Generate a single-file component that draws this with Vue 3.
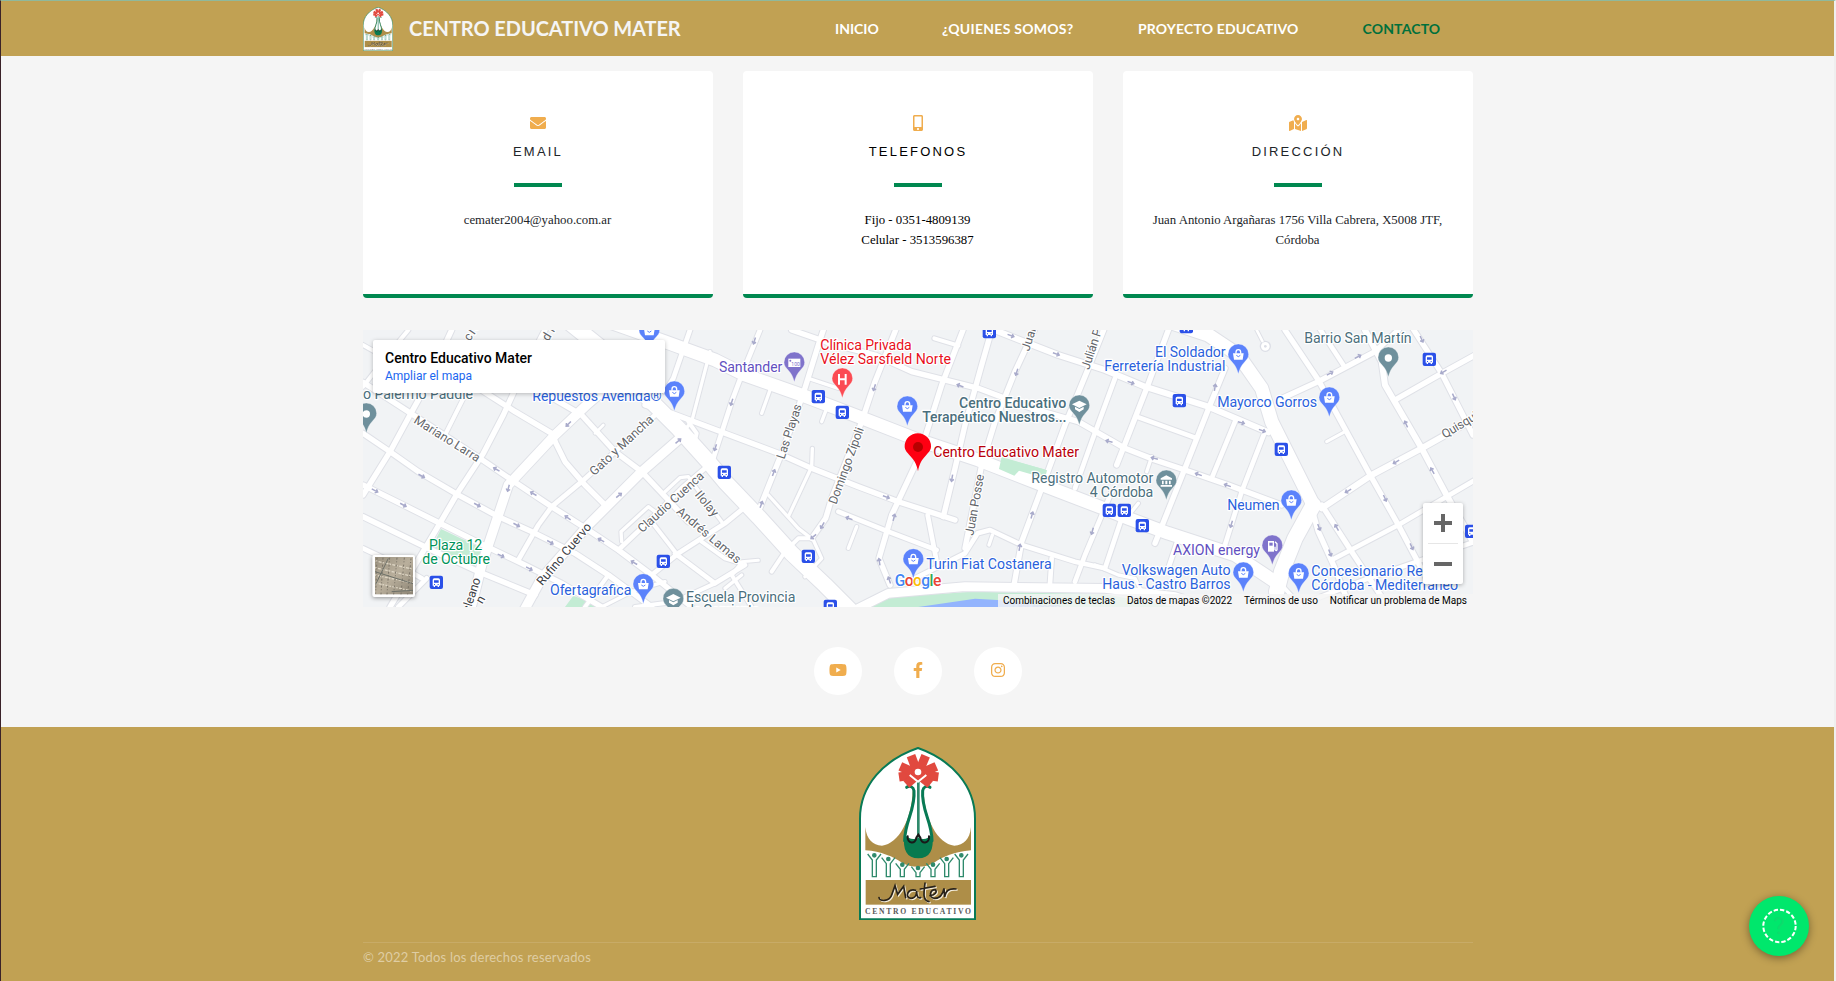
<script setup>
const nav = [
  { t: 'INICIO', c: 'n1' },
  { t: '¿QUIENES SOMOS?', c: 'n2' },
  { t: 'PROYECTO EDUCATIVO', c: 'n3' },
  { t: 'CONTACTO', c: 'n4 active' },
]
const cards = [
  { icon: 'mail', title: 'EMAIL', lines: ['cemater2004@yahoo.com.ar'], tone: 'ink' },
  { icon: 'phone', title: 'TELEFONOS', lines: ['Fijo - 0351-4809139', 'Celular - 3513596387'], tone: 'black' },
  { icon: 'map', title: 'DIRECCIÓN', lines: ['Juan Antonio Argañaras 1756 Villa Cabrera, X5008 JTF,', 'Córdoba'], tone: 'ink' },
]
const petals = [[120, 90], [124, 58], [156, 26], [200, 26], [232, 58], [238, 90], [142, 112], [214, 112]]
const figures = [[46, 0], [88, 11], [130, 28], [177, 38], [222, 28], [263, 11], [307, 0]]
// Map units are thirds of a pixel.
const roads = [
  // west
  [16, '24,172 160,260 375,400 470,465 590,545 700,615 790,675 890,750 1010,846'],
  [16, '24,325 105,380 190,440 310,510 430,575 530,620 660,685 760,750 890,846'],
  [16, '24,480 145,540 265,600 385,660 500,715 620,775 740,846'],
  [16, '24,575 240,680 370,740 540,810'],
  [14, '24,670 130,720 200,760'],
  [16, '24,510 105,380 165,270 215,180 260,80 290,15'],
  [12, '24,185 90,100 160,15'],
  [12, '24,60 150,130 290,210'],
  [16, '105,846 240,620 310,500 385,385 445,270 500,150 570,15'],
  [12, '270,330 330,210'],
  [14, '130,846 215,760'],
  [28, '505,860 560,760 700,600 860,440 975,340'],
  [28, '345,860 380,720 430,570 460,480 600,330 700,235 800,150'],
  [14, '490,705 550,600 590,545 680,470 780,380 900,270'],
  [16, '340,170 480,260 590,325 603,355 630,410 690,480 750,540'],
  [16, '560,200 680,270 780,380 860,440 940,525 1000,590'],
  [46, '640,-10 790,110 880,220 970,310 1060,410 1110,470 1210,575 1310,685 1410,780 1490,860'],
  [16, '870,240 950,265 1110,325 1270,385 1370,430 1510,485 1630,530 1800,585'],
  [38, '760,-10 930,50 1080,105 1170,150 1340,210 1510,275 1690,345 1870,405 2050,475 2240,548 2320,580 2440,625 2640,690 2760,770'],
  [14, '1005,15 955,160 930,200'],
  [10, '1065,80 1010,290 985,320'],
  [12, '1000,290 1025,325 1020,345'],
  [14, '1075,400 1130,230 1160,150 1215,15'],
  [8, '745,300 720,325'],
  [10, '800,650 798,620 880,545 900,560'],
  [12, '890,590 960,680'],
  [10, '930,500 975,458 1000,455 1025,490 1100,590'],
  [14, '790,675 880,590 980,490 1050,430'],
  [14, '890,750 970,685 1110,595 1165,550'],
  [14, '960,685 1080,775 1170,720'],
  [12, '1080,775 960,830 840,846'],
  [12, '760,750 690,846'],
  [10, '740,846 830,800 930,770'],
  [12, '1040,650 1110,700 1160,715 1130,750 1190,846'],
  [9, '1160,710 1210,706'],
  [10, '1110,790 1160,750'],
  // centre
  [16, '1210,560 1280,385 1345,205 1390,60 1405,15'],
  [16, '1370,640 1412,580 1430,520 1520,290 1560,170 1622,15'],
  [16, '1605,780 1572,700 1610,570 1690,400 1760,180 1824,15'],
  [16, '1765,575 1800,430 1830,300 1880,120 1910,15'],
  [16, '1830,670 1880,420 1920,290 1980,140 2038,15'],
  [16, '1978,775 2000,650 2060,490 2130,300 2200,130 2246,15'],
  [14, '2160,770 2190,690 2270,500'],
  [14, '2160,490 2210,350 2280,160'],
  [16, '1310,15 1440,60 1560,90 1670,140 1870,190 2030,250 2170,290 2310,370 2400,405 2490,435 2620,480 2780,540'],
  [18, '1880,0 2110,90 2250,135 2370,185 2560,245 2740,322'],
  [14, '1450,560 1600,620 1745,675'],
  [14, '1718,570 1746,715'],
  [10, '1480,670 1505,605'],
  [10, '1240,510 1330,610 1375,645 1400,700 1350,755'],
  [10, '1300,575 1370,425 1372,370'],
  [10, '1220,265 1245,195'],
  [10, '1400,290 1415,250'],
  [10, '1360,160 1450,190'],
  [12, '1738,40 1810,62'],
  [14, '1660,770 1730,735 1830,685 1868,625 1905,615 2000,660 2160,710 2250,730'],
  [10, '1902,660 1912,630'],
  [14, '2085,775 2090,700'],
  [26, '1470,870 1600,805 1830,785 2250,790 2460,815 2560,846'],
  [12, '1250,740 1290,680 1330,640 1370,640'],
  // east
  [14, '2250,730 2300,580'],
  [16, '2400,655 2490,430 2565,240 2610,130'],
  [16, '2285,420 2375,190 2440,15'],
  [14, '2570,460 2640,290'],
  [14, '2610,660 2660,500 2730,320'],
  [14, '2345,275 2520,338'],
  [10, '2330,560 2350,535'],
  [10, '2375,440 2390,395'],
  [14, '2440,730 2470,640'],
  [10, '2220,720 2290,750 2340,760 2360,800'],
  [40, '2440,-10 2560,30 2650,90 2720,190 2750,290 2840,470 2875,540'],
  [46, '2875,540 2820,640 2780,740 2765,800'],
  [12, '2780,780 2840,846'],
  [16, '2790,15 2890,165 3040,440 3130,600 3220,770'],
  [16, '2770,225 2890,170 3060,80 3130,15'],
  [14, '2890,5 2965,120'],
  [18, '3030,15 3080,110 3090,180 3200,370 3280,520 3354,650'],
  [16, '3170,5 3260,145 3354,330'],
  [16, '3120,225 3260,145 3360,90'],
  [18, '2900,550 3050,450 3200,370 3360,280'],
  [14, '2930,705 3130,600 3360,465'],
  [16, '2870,550 2890,620 2940,730 2990,860'],
  [16, '2900,540 2990,680 3100,846'],
  [14, '2860,830 3040,760 3360,650'],
  [8, '2705,15 2722,48'],
  [9, '2915,350 2970,320'],
]
const arrows = [
  [640, 297, 135], [424, 433, -150], [460, 490, 105], [535, 506, -150], [200, 453, 28], [60, 497, 28],
  [145, 540, 28], [367, 540, 28], [485, 600, 28], [638, 578, -145], [586, 652, 30], [438, 692, 25],
  [523, 731, 28], [738, 645, -150], [837, 713, -150], [792, 511, -40], [970, 348, -40], [1081, 368, 108], [1130, 232, 108],
  [1198, 48, 108], [1256, 443, -70], [1219, 538, -70], [1558, 188, 108], [1594, 516, 20], [1482, 580, -160],
  [1402, 602, 120], [1375, 635, 140], [1617, 577, -75], [1573, 710, -100], [1603, 765, -110], [1791, 460, 100],
  [1815, 182, -160], [1985, 142, 108], [1968, 32, 20], [2104, 87, 20], [2031, 570, -75], [1994, 667, -80],
  [2212, 619, 105], [2328, 173, 20], [2580, 187, -80], [2659, 293, 15], [2722, 317, 20], [2262, 349, -165],
  [2398, 400, -165], [2530, 448, -160], [2617, 481, -160], [2629, 598, 108], [3009, 95, -28], [2925, 145, -28],
  [3200, 43, 65], [3265, 141, 150], [3297, 216, 65], [3153, 297, -115], [3232, 437, -120], [3123, 411, 150],
  [2979, 498, 150], [3090, 520, 65], [2892, 607, 70], [2945, 607, -120], [2925, 684, 70], [3170, 665, 65],
]
const buses = [[1108, 442], [925, 709], [244, 772], [1390, 215], [1462, 262], [1903, 20], [1360, 694], [1426, 844], [2473, 227], [2494, 5], [2263, 556], [2308, 556], [2362, 602], [2779, 373], [3223, 103], [3350, 619]]
// x, y of the pin's tip, fill, glyph
const pins = [
  [883, 72, '#5b82fb', 'bag'], [958, 256, '#5b82fb', 'bag'], [865, 834, '#5b82fb', 'bag'],
  [1657, 301, '#5b82fb', 'bag'], [1675, 759, '#5b82fb', 'bag'], [2650, 145, '#5b82fb', 'bag'],
  [2923, 274, '#5b82fb', 'bag'], [2809, 583, '#5b82fb', 'bag'], [2665, 799, '#5b82fb', 'bag'],
  [2831, 802, '#5b82fb', 'bag'], [1318, 169, '#7f73cb', 'atm'], [1462, 217, '#fb4b53', 'h'],
  [2173, 298, '#6f909c', 'cap'], [955, 878, '#6f909c', 'cap'], [34, 322, '#6f909c', 'dot'],
  [3100, 154, '#6f909c', 'dot'], [2434, 523, '#6f909c', 'bank'], [2752, 718, '#7f73cb', 'gas'],
]
// x, baseline, width, text, class, rotation
const labels = [
  [24, 223, 330, 'o Palermo Paddle', 'slate', 0],
  [532, 229, 388, 'Repuestos Avenida®', 'blue', 0],
  [222, 676, 160, 'Plaza 12', 'green', 0],
  [202, 718, 203, 'de Octubre', 'green', 0],
  [585, 809, 244, 'Ofertagrafica', 'blue', 0],
  [993, 830, 328, 'Escuela Provincia', 'slate', 0],
  [993, 870, 220, 'de Comiente', 'slate', 0],
  [1092, 142, 190, 'Santander', 'violet', 0],
  [1396, 76, 274, 'Clínica Privada', 'red', 0],
  [1396, 118, 392, 'Vélez Sarsfield Norte', 'red', 0],
  [1812, 250, 322, 'Centro Educativo', 'slate med', 0],
  [1702, 292, 432, 'Terapéutico Nuestros...', 'slate med', 0],
  [1735, 397, 437, 'Centro Educativo Mater', 'crimson', 0],
  [2029, 475, 366, 'Registro Automotor', 'slate', 0],
  [2204, 517, 191, '4 Córdoba', 'slate', 0],
  [1714, 733, 376, 'Turin Fiat Costanera', 'blue', 0],
  [2400, 97, 212, 'El Soldador', 'blue', 0],
  [2248, 139, 363, 'Ferretería Industrial', 'blue', 0],
  [2587, 247, 299, 'Mayorco Gorros', 'blue', 0],
  [2848, 55, 322, 'Barrio San Martín', 'slate', 0],
  [2617, 556, 157, 'Neumen', 'blue', 0],
  [2454, 691, 261, 'AXION energy', 'violet', 0],
  [2300, 751, 327, 'Volkswagen Auto', 'blue', 0],
  [2242, 793, 385, 'Haus - Castro Barros', 'blue', 0],
  [2869, 754, 430, 'Concesionario Renault', 'blue', 0],
  [2869, 796, 440, 'Córdoba - Mediterráneo', 'blue', 0],
  [1970, 864, 150, 'Río Primero', 'water', 0],
  [174, 292, 226, 'Mariano Larra', 'street', 32],
  [718, 454, 246, 'Gato y Mancha', 'street', -43],
  [862, 625, 252, 'Claudio Cuenca', 'street', -42],
  [1018, 510, 88, 'Ilolay', 'street', 50],
  [962, 563, 240, 'Andrés Lamas', 'street', 40],
  [562, 784, 232, 'Rufino Cuervo', 'street dark', -50],
  [344, 864, 106, 'cleano', 'street dark', -72],
  [352, 890, 80, 'ón', 'street dark', -60],
  [344, 50, 74, 'cler', 'street', -55],
  [580, 50, 74, 'dro', 'street', -58],
  [1288, 404, 170, 'Las Playas', 'street', -72],
  [1444, 540, 242, 'Domingo Zípoli', 'street', -70],
  [1855, 633, 186, 'Juan Posse', 'street', -80],
  [2022, 80, 114, 'Juan B', 'street', -72],
  [2202, 136, 146, 'Julián Pa', 'street', -72],
  [3269, 341, 138, 'Quisquis', 'street', -31],
]
</script>

<template>
  <div class="page">
    <svg class="defs" width="0" height="0" aria-hidden="true">
      <symbol id="mater" viewBox="0 0 351 519" preserveAspectRatio="none">
        <path d="M3 517V215C3 115 75 38 177 3 276 38 348 115 348 215V517Z" fill="#fff" stroke="#087a55" stroke-width="6" />
        <path d="M19 240c4 38 22 54 50 56 50-5 90-80 92-166H194c2 86 42 161 92 166 28-2 46-18 50-56v70c-50 4-85 20-109 36-28 18-72 18-100 0-24-16-60-33-108-36z" fill="#ae8e48" />
        <path d="M164 124c6 64-26 100-28 156h84c-2-56-34-92-28-156z" fill="#fff" />
        <path d="M136 262q20 22 42 10 22 12 42-10c6 48-8 72-42 72s-48-24-42-72z" fill="#087a4f" />
        <path d="M143 121c10-7 20-1 22 10 5 58-28 92-28 150M213 121c-10-7-20-1-22 10-5 58 28 92 28 150" fill="none" stroke="#087a55" stroke-width="9" stroke-linecap="round" />
        <path d="M178 100v172" fill="none" stroke="#2f8a6c" stroke-width="8" />
        <path d="M146 268c-2 22 24 26 26 4l6-9 6 9c2 22 28 18 26-4" fill="none" stroke="#191919" stroke-width="6" stroke-linecap="round" />
        <path v-for="p in petals" :key="p[0] + '-' + p[1]" :d="`M177 82L${p[0]} ${p[1]}`" stroke="#e1493f" stroke-width="27" />
        <circle cx="177" cy="75" r="10" fill="#fff" />
        <path d="m152 84 25 20 25-20" fill="none" stroke="#fff" stroke-width="6" />
        <g v-for="p in figures" :key="p[0]" fill="none" stroke="#2f8a6c" stroke-width="4">
          <circle :cx="p[0]" :cy="325 + p[1]" r="5" fill="#2f8a6c" />
          <path :d="`M${p[0] - 20} ${321 + p[1]}l14 18V389h12V${339 + p[1]}l14-18`" />
        </g>
        <rect x="20" y="399" width="316" height="74" fill="#ae8e48" />
        <g fill="none" stroke-width="5" stroke-linecap="round">
          <path v-for="s in [['#f5efe0', 3], ['#28221a', 0]]" :key="s[0]" :stroke="s[0]" :transform="`translate(${s[1]} ${s[1]})`" d="M60 452c2 14 32 10 38-8l10-28 8 26 18-24 6 34M170 430c-24-8-34 22-14 24 14 0 17-14 17-22 0 18 4 22 12 20M198 408c-2 22-10 52 12 56M184 426l44-8M213 446c16-2 22-12 16-18-16 0-22 24-2 26 16 0 24-10 28-30l2 26c4-20 12-26 34-24" />
        </g>
        <text x="18" y="502" textLength="318" font-family="Liberation Serif, serif" font-size="23" font-weight="700" fill="#5a5a5a">CENTRO EDUCATIVO</text>
      </symbol>
    </svg>

    <header class="bar">
      <div class="wrap bar-in">
        <svg class="logo-sm"><use href="#mater" width="30" height="44" /></svg>
        <span class="brand">CENTRO EDUCATIVO MATER</span>
        <nav>
          <a v-for="n in nav" :key="n.t" :class="n.c">{{ n.t }}</a>
        </nav>
      </div>
    </header>

    <main class="wrap">
      <section class="cards">
        <article v-for="c in cards" :key="c.title" :class="['card', c.tone]">
          <svg v-if="c.icon === 'mail'" class="ico" viewBox="0 0 512 512"><path d="M502.300 190.800c3.900-3.100 9.700-.2 9.700 4.700V400c0 26.500-21.500 48-48 48H48c-26.500 0-48-21.500-48-48V195.600c0-5 5.700-7.800 9.700-4.700 22.400 17.400 52.100 39.500 154.100 113.600 21.100 15.400 56.700 47.800 92.200 47.600 35.700.3 72-32.800 92.300-47.600 102-74.100 131.600-96.300 154-113.700zM256 320c23.200.4 56.600-29.200 73.400-41.400 132.700-96.300 142.800-104.700 173.400-128.700 5.800-4.500 9.200-11.500 9.200-18.900v-19c0-26.500-21.500-48-48-48H48c-26.500 0-48 21.500-48 48v19c0 7.400 3.400 14.300 9.200 18.900 30.600 23.900 40.700 32.400 173.400 128.700 16.800 12.200 50.200 41.800 73.400 41.400z" /></svg>
          <svg v-else-if="c.icon === 'phone'" class="ico" viewBox="-96 0 512 512"><path d="M272 0H48C21.500 0 0 21.500 0 48v416c0 26.500 21.500 48 48 48h224c26.500 0 48-21.500 48-48V48c0-26.500-21.500-48-48-48zM160 480c-17.700 0-32-14.300-32-32s14.300-32 32-32 32 14.300 32 32-14.300 32-32 32zm112-108c0 6.600-5.400 12-12 12H60c-6.600 0-12-5.400-12-12V60c0-6.600 5.400-12 12-12h200c6.600 0 12 5.400 12 12v312z" /></svg>
          <svg v-else class="ico wide" viewBox="0 0 576 512"><path d="M288 0c-69.600 0-126 56.400-126 126 0 56.300 82.400 158.800 113.900 196 6.400 7.500 17.800 7.500 24.200 0C331.600 284.800 414 182.300 414 126 414 56.400 357.600 0 288 0zm0 168c-23.200 0-42-18.800-42-42s18.800-42 42-42 42 18.800 42 42-18.800 42-42 42zM20.100 216A32 32 0 0 0 0 245.700v250.300c0 11.300 11.400 19.100 21.900 14.900L160 448V214.900c-8.800-16-16.100-31.500-21.300-46.400L20.100 216zM288 359.700c-14.100 0-27.400-6.200-36.500-17-19.700-23.200-40.600-49.600-59.500-76.700v182l192 64V266c-18.900 27.100-39.800 53.500-59.500 76.700-9.100 10.800-22.400 17-36.500 17zm266.100-198.500L416 224v288l139.900-56A32 32 0 0 0 576 426.300V176c0-11.300-11.400-19.100-21.900-14.800z" /></svg>
          <h4>{{ c.title }}</h4>
          <hr />
          <p><span v-for="l in c.lines" :key="l">{{ l }}</span></p>
        </article>
      </section>

      <section class="map">
        <svg class="canvas" viewBox="24 15 3330 831">
          <defs>
            <linearGradient id="sat" x1="0" x2="1" y1="0" y2="1"><stop offset="0" stop-color="#9a917f" /><stop offset=".5" stop-color="#b9af9c" /><stop offset="1" stop-color="#8c8474" /></linearGradient>
          </defs>
          <rect x="24" y="15" width="3330" height="831" fill="#f1f3f5" />
          <path d="M258 612 385 672 350 740 228 672ZM655 812 745 846H630ZM1940 398 2078 436 2070 458 1990 434 1978 450 1930 428Z" fill="#c3ecd4" />
          <path d="M1480 860 1620 815 1850 800 2250 808 2460 846V870H1480Z" fill="#c3ecd4" />
          <path d="M1690 846 1860 821 1940 826 2130 852Z" fill="#93b4fd" />
          <g fill="none" stroke-linecap="round" stroke-linejoin="round">
            <polyline v-for="(r, i) in roads" :key="'c' + i" :points="r[1]" stroke="#dfe1e7" :stroke-width="r[0] + 6" />
            <circle cx="2731" cy="64" r="15" stroke="#dcdee6" stroke-width="4" fill="#fff" />
            <polyline v-for="(r, i) in roads" :key="'r' + i" :points="r[1]" stroke="#fff" :stroke-width="r[0]" />
            <circle cx="2731" cy="64" r="4" fill="#dcdee6" />
          </g>
          <path d="M1940 396 2076 436 2070 460 1992 437 1978 452 1932 432Z" fill="#c3ecd4" />
          <g v-for="(a, i) in arrows" :key="'a' + i" :transform="`translate(${a[0]} ${a[1]}) rotate(${a[2]})`">
            <path d="M-11 0H8M2-6 9 0 2 6" fill="none" stroke="#a9abcb" stroke-width="4.500" />
          </g>
          <text v-for="(l, i) in labels" :key="'l' + i" :class="['lbl', l[4]]" :textLength="l[2]" :transform="`translate(${l[0]} ${l[1]}) rotate(${l[5]})`">{{ l[3] }}</text>
          <g v-for="(b, i) in buses" :key="'b' + i" :transform="`translate(${b[0]} ${b[1]})`">
            <rect x="-20" y="-20" width="40" height="40" rx="6" fill="#2b50e8" />
            <path d="M-11 10V-7q0-5 5-5H6q5 0 5 5V10H8v4H4v-4H-4v4h-4v-4Z" fill="#fff" />
            <path d="M-7-6H7V1H-7ZM-7 5h3v3h-3ZM4 5h3v3H4Z" fill="#2b50e8" />
          </g>
          <g v-for="(p, i) in pins" :key="'p' + i" :transform="`translate(${p[0]} ${p[1]})`">
            <path d="M0 2C-4-14-9-23-17-32-25-41-31-46-31-57a31 31 0 0 1 62 0C31-46 25-41 17-32 9-23 4-14 0 2Z" :fill="p[2]" stroke="#fff" stroke-opacity=".5" stroke-width="2" />
            <g v-if="p[3] === 'bag'">
              <path d="M-16-60H16L13-41H-13Z" fill="#fff" />
              <path d="M-7-59v-4a7 8 0 0 1 14 0v4" fill="none" stroke="#fff" stroke-width="4" />
              <path d="M-6-54q6 8 12 0" fill="none" :stroke="p[2]" stroke-width="3" />
            </g>
            <path v-else-if="p[3] === 'cap'" d="M0-71 22-60 0-49-22-60ZM-13-53 0-46 13-53v8L0-37-13-45Z" fill="#fff" />
            <circle v-else-if="p[3] === 'dot'" cy="-55" r="11" fill="#fff" />
            <path v-else-if="p[3] === 'h'" d="M-13-70v32h6v-13H7v13h6v-32H7v13H-7v-13Z" fill="#fff" />
            <path v-else-if="p[3] === 'bank'" d="M0-72 17-63v4h-34v-4ZM-13-56h5v11h-5ZM-3-56h6v11h-6ZM8-56h5v11H8ZM-17-43h34v5h-34Z" fill="#fff" />
            <g v-else-if="p[3] === 'atm'">
              <rect x="-18" y="-68" width="36" height="25" fill="#fff" />
              <text x="-9" y="-47" font-size="15" class="tiny">100</text><circle cx="-12" cy="-62" r="3" fill="#7f73cb" />
            </g>
            <g v-else>
              <path d="M-13-70H5v32H-13Z" fill="#fff" /><path d="M-9-65H1v9H-9Z" fill="#7f73cb" />
              <path d="M8-68 14-62v18q-2 5-6 0v-9" fill="none" stroke="#fff" stroke-width="4" />
            </g>
          </g>
          <path d="M1689 439c-4-24-13-35-24-47-9-10-16-16-16-28a39 39 0 0 1 79 0c0 12-7 18-16 28-11 12-19 23-23 47Z" fill="#fe0012" />
          <circle cx="1689" cy="366" r="15" fill="#b80000" />
          <text class="google" x="1619" y="784" textLength="140"><tspan fill="#4285f4">G</tspan><tspan fill="#ea4335">o</tspan><tspan fill="#fbbc05">o</tspan><tspan fill="#4285f4">g</tspan><tspan fill="#34a853">l</tspan><tspan fill="#ea4335">e</tspan></text>
          <g>
            <rect x="52" y="690" width="128" height="126" rx="6" fill="#fff" class="shade" />
            <rect x="60" y="696" width="114" height="112" fill="url(#sat)" />
            <g fill="none" stroke-width="4">
              <path d="M62 708 172 732M60 728l112 26M60 750l114 24M62 774l108 24" stroke="#ddd5c4" stroke-dasharray="5 4 9 3" />
              <path d="M66 698 62 806M84 698 78 808M104 698 96 808M126 698l-10 110M148 698l-10 110M168 700l-10 108" stroke="#797266" stroke-dasharray="6 5 3 7" stroke-width="3" />
              <path d="M60 740 174 776M62 778 100 700M110 800l64-4" stroke="#6d7068" stroke-width="3" />
            </g>
          </g>
        </svg>
        <div class="place"><b>Centro Educativo Mater</b><span>Ampliar el mapa</span></div>
        <div class="zoom"><i class="plus"></i><i class="sep"></i><i class="minus"></i></div>
        <div class="legal"><span>Combinaciones de teclas</span><span>Datos de mapas ©2022</span><span>Términos de uso</span><span>Notificar un problema de Maps</span></div>
      </section>

      <section class="social">
        <a><svg width="18" height="16" viewBox="0 0 576 512"><path d="M549.700 124.100c-6.300-23.700-24.800-42.300-48.300-48.600C458.800 64 288 64 288 64S117.200 64 74.600 75.500c-23.500 6.300-42 24.900-48.300 48.600C14.900 167 14.900 256.400 14.900 256.400s0 89.400 11.400 132.300c6.300 23.700 24.800 41.500 48.300 47.800C117.200 448 288 448 288 448s170.800 0 213.400-11.500c23.500-6.300 42-24.200 48.300-47.800 11.400-42.900 11.400-132.300 11.400-132.300s0-89.400-11.400-132.300zM232.200 337.600V175.200l142.700 81.200z" /></svg></a>
        <a><svg width="10" height="16" viewBox="0 0 320 512"><path d="m279.100 288 14.300-92.700h-89V135.200c0-25.300 12.400-50.100 52.200-50.100h40.500V6.300S260.400 0 225.400 0C152.200 0 104.400 44.400 104.400 124.700v70.600H22.900V288h81.500v224h100.200V288z" /></svg></a>
        <a><svg width="14" height="16" viewBox="0 0 448 512"><path d="M224 141c-63.600 0-115 51.300-115 115s51.300 115 115 115 115-51.300 115-115-51.300-115-115-115zm0 190c-41 0-75-33-75-75s34-75 75-75 75 33 75 75-34 75-75 75zm146-194a27 27 0 1 1-54 0 27 27 0 0 1 54 0zM132 32C59 32 0 91 0 164v184c0 73 59 132 132 132h184c73 0 132-59 132-132V164c0-73-59-132-132-132zm0 40h184c51 0 92 41 92 92v184c0 51-41 92-92 92H132c-51 0-92-41-92-92V164c0-51 41-92 92-92z" fill-rule="evenodd" /></svg></a>
      </section>
    </main>

    <footer>
      <div class="wrap">
        <svg class="logo-lg"><use href="#mater" width="117" height="173" /></svg>
        <div class="rule"></div>
        <p class="copy">© 2022 Todos los derechos reservados</p>
      </div>
    </footer>

    <div class="fab"><svg width="60" height="60" viewBox="0 0 60 60"><text x="30" y="38" text-anchor="middle">?</text><circle cx="30.500" cy="30" r="16.200" /></svg></div>
  </div>
</template>

<style>
body { background: #f5f5f5; overflow: hidden; }
</style>
<style scoped>
.page { position: relative; box-sizing: border-box; width: 1836px; height: 981px; overflow: hidden; background: #f5f5f5; border-left: 1px solid #3a2228; border-right: 2px solid #efefef; border-top: 1px solid #8fb99c; display: flex; flex-direction: column; }
.defs { position: absolute; }
.wrap { width: 1110px; margin: 0 auto 0 362px; }
.bar { height: 55px; background: #c1a153; flex: none; }
.bar-in { display: flex; align-items: center; height: 55px; }
.logo-sm { width: 30px; height: 44px; }
.brand { margin-left: 16px; width: 426px; font: 700 20px Lato, sans-serif; letter-spacing: -.07px; color: #f5f5f5; white-space: nowrap; padding-bottom: 2px; }
nav { display: flex; font: 700 14px Lato, sans-serif; color: #fff; white-space: nowrap; }
.n1 { width: 107px; }
.n2 { width: 196px; letter-spacing: .27px; }
.n3 { width: 224.500px; letter-spacing: .17px; }
.active { color: #00703c; letter-spacing: .15px; }
.cards { display: flex; gap: 30px; padding-top: 15px; }
.card { box-sizing: border-box; width: 350px; height: 227px; background: #fff; border-bottom: 4px solid #008850; border-radius: 4px; display: flex; flex-direction: column; align-items: center; padding-top: 44px; color: #212529; }
.card.black { color: #000; }
.ico { width: 16px; height: 16px; fill: #f0ad4e; }
.ico.wide { width: 18px; }
h4 { margin: 13px 0 0; font: 400 13px/16px "Liberation Sans", sans-serif; letter-spacing: 2.200px; }
hr { width: 48px; height: 4px; border: 0; margin: 23px 0 23px; background: #008850; }
.card p { margin: 0 1px 0 0; font: 12.800px/20px "Liberation Serif", serif; display: flex; flex-direction: column; align-items: center; white-space: nowrap; }
.map { position: relative; margin-top: 32px; width: 1110px; height: 277px; overflow: hidden; }
.canvas { display: block; width: 1110px; height: 277px; }
.lbl { font: 400 42.500px Roboto, sans-serif; paint-order: stroke; stroke: #fff; stroke-width: 7px; stroke-linejoin: round; }
.slate { fill: #4b6f7d; }
.med { font-weight: 500; }
.blue { fill: #2a62dc; }
.green { fill: #00935a; }
.violet { fill: #6250bf; }
.red { fill: #e8101c; }
.crimson { fill: #b9000b; }
.water { fill: #7c9bd8; stroke: none; }
.street { font-size: 37px; fill: #63666b; }
.dark { fill: #3c4045; }
.tiny { font-family: Roboto, sans-serif; fill: #7f73cb; }
.google { font: 500 47px Roboto, sans-serif; paint-order: stroke; stroke: #fff; stroke-width: 6px; }
.shade { filter: drop-shadow(0 3px 6px rgba(0, 0, 0, .4)); }
.place { position: absolute; left: 10px; top: 10px; box-sizing: border-box; width: 292px; height: 53px; background: #fff; box-shadow: 0 1px 4px rgba(0, 0, 0, .25); border-radius: 2px; padding: 9px 12px; display: flex; flex-direction: column; font-family: Roboto, sans-serif; }
.place b { font-size: 14px; line-height: 18px; font-weight: 500; color: #000; }
.place span { font-size: 12px; line-height: 19px; color: #1a66f0; }
.zoom { position: absolute; right: 10px; top: 173px; width: 40px; height: 81px; background: #fff; border-radius: 2px; box-shadow: 0 1px 4px rgba(0, 0, 0, .3); display: flex; flex-direction: column; align-items: center; }
.plus { margin-top: 11px; width: 18px; height: 18px; background: linear-gradient(#666, #666) center / 18px 4px no-repeat, linear-gradient(#666, #666) center / 4px 18px no-repeat; }
.sep { margin-top: 11px; width: 30px; height: 1px; background: #e6e6e6; }
.minus { margin-top: 18px; width: 18px; height: 4px; background: #666; }
.legal { position: absolute; right: 0; bottom: 0; height: 13px; display: flex; justify-content: space-between; box-sizing: border-box; width: 475px; padding: 0 6px 0 5px; background: rgba(245, 245, 245, .82); font: 10px/13px Roboto, sans-serif; color: #000; white-space: nowrap; }
.social { display: flex; justify-content: center; gap: 32px; margin-top: 40px; }
.social a { width: 48px; height: 48px; border-radius: 50%; background: #fff; display: flex; align-items: center; justify-content: center; padding-bottom: 2px; box-sizing: border-box; }
.social svg { fill: #f0ad4e; }
footer { margin-top: 32px; flex: 1; background: #c1a153; }
.logo-lg { display: block; width: 117px; height: 173px; margin: 20px 0 0 496px; }
.rule { height: 1px; margin-top: 22px; background: #c8ab67; }
.copy { margin: 6px 0 0; font: 13px/16px Lato, sans-serif; letter-spacing: .2px; color: #dfcda3; }
.fab { position: absolute; left: 1748px; top: 895px; width: 60px; height: 60px; border-radius: 50%; background: #00e76c; box-shadow: 0 2px 9px rgba(0, 0, 0, .4); }
.fab circle { fill: none; stroke: #fff; stroke-width: 2; stroke-dasharray: 4.360 2; }
.fab text { font: 24px Roboto, sans-serif; fill: #0ddb6c; }
</style>
